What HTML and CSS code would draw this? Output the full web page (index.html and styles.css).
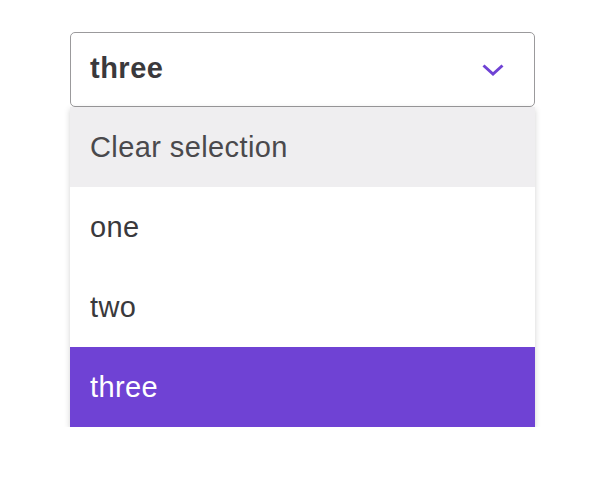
FILE: index.html
```html
<!DOCTYPE html>
<html>
<head>
<meta charset="utf-8">
<link rel="stylesheet" href="styles.css">
</head>
<body>
<div class="wrap">
  <div class="select">
    <span class="value">three</span>
    <svg class="chev" width="24" height="16" viewBox="0 0 24 16"><path d="M2.5 3.5 L12 12 L21.5 3.5" fill="none" stroke="#6f42d4" stroke-width="3"/></svg>
  </div>
  <ul class="menu">
    <li class="opt clear">Clear selection</li>
    <li class="opt">one</li>
    <li class="opt">two</li>
    <li class="opt active">three</li>
  </ul>
</div>
</body>
</html>
```
FILE: styles.css
```css
html, body {
  margin: 0;
  background: #fff;
}
body {
  font-family: "Liberation Sans", Arial, sans-serif;
  color: #3a393c;
}
.wrap {
  padding: 32px 0 0 70px;
  width: 465px;
}
.select {
  box-sizing: border-box;
  height: 75px;
  border: 1px solid #9b9a9c;
  border-radius: 5px;
  display: flex;
  align-items: center;
  justify-content: space-between;
  padding: 0 29px 0 19px;
  background: #fff;
}
.value {
  font-weight: bold;
  font-size: 29px;
  letter-spacing: 0.5px;
  margin-top: -2px;
}
.chev {
  display: block;
}
.menu {
  list-style: none;
  margin: 0;
  padding: 0;
  box-shadow: 0 2px 6px rgba(0,0,0,0.18);
}
.opt {
  height: 80px;
  display: flex;
  align-items: center;
  padding-left: 20px;
  font-size: 29px;
  letter-spacing: 0.4px;
  background: #fff;
}
.clear {
  background: #efeef0;
  color: #4a494c;
}
.active {
  background: #6f42d4;
  color: #fff;
}
```
